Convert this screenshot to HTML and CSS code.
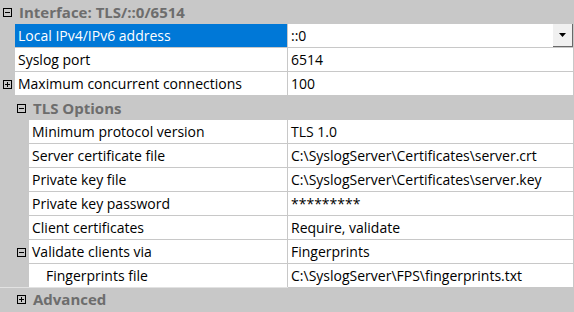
FILE: index.html
```html
<!DOCTYPE html>
<html lang="en">
<head>
    <meta charset="UTF-8">
    <title>Interface properties</title>
    <link rel="stylesheet" href="styles.css">
</head>
<body>

    <div class="grid">
        <div class="row cat">
            <span class="gutter g1"><svg class="exp" width="9" height="9" viewBox="0 0 9 9"><rect x="0.5" y="0.5" width="8" height="8" fill="none" stroke="#000"/><path d="M2 4.5h5" stroke="#000"/></svg></span>
            <span class="title">Interface: TLS/::0/6514</span>
        </div>

        <div class="row prop sel">
            <span class="gutter g1"></span>
            <span class="name">Local IPv4/IPv6 address</span>
            <span class="value">::0<span class="drop"><svg width="7" height="4" viewBox="0 0 7 4"><path d="M0 0h7L3.5 4z" fill="#000"/></svg></span></span>
        </div>
        <div class="row prop">
            <span class="gutter g1"></span>
            <span class="name">Syslog port</span>
            <span class="value">6514</span>
        </div>
        <div class="row prop">
            <span class="gutter g1"><svg class="exp" width="9" height="9" viewBox="0 0 9 9"><rect x="0.5" y="0.5" width="8" height="8" fill="none" stroke="#000"/><path d="M2 4.5h5M4.5 2v5" stroke="#000"/></svg></span>
            <span class="name">Maximum concurrent connections</span>
            <span class="value">100</span>
        </div>

        <div class="row cat">
            <span class="gutter g2"><svg class="exp" width="9" height="9" viewBox="0 0 9 9"><rect x="0.5" y="0.5" width="8" height="8" fill="none" stroke="#000"/><path d="M2 4.5h5" stroke="#000"/></svg></span>
            <span class="title">TLS Options</span>
        </div>
        <div class="row prop">
            <span class="gutter g2"></span>
            <span class="name">Minimum protocol version</span>
            <span class="value">TLS 1.0</span>
        </div>
        <div class="row prop">
            <span class="gutter g2"></span>
            <span class="name">Server certificate file</span>
            <span class="value">C:\SyslogServer\Certificates\server.crt</span>
        </div>
        <div class="row prop">
            <span class="gutter g2"></span>
            <span class="name">Private key file</span>
            <span class="value">C:\SyslogServer\Certificates\server.key</span>
        </div>
        <div class="row prop">
            <span class="gutter g2"></span>
            <span class="name">Private key password</span>
            <span class="value">*********</span>
        </div>
        <div class="row prop">
            <span class="gutter g2"></span>
            <span class="name">Client certificates</span>
            <span class="value">Require, validate</span>
        </div>
        <div class="row prop">
            <span class="gutter g2"><svg class="exp" width="9" height="9" viewBox="0 0 9 9"><rect x="0.5" y="0.5" width="8" height="8" fill="none" stroke="#000"/><path d="M2 4.5h5" stroke="#000"/></svg></span>
            <span class="name">Validate clients via</span>
            <span class="value">Fingerprints</span>
        </div>
        <div class="row prop">
            <span class="gutter g2"></span>
            <span class="name sub">Fingerprints file</span>
            <span class="value">C:\SyslogServer\FPS\fingerprints.txt</span>
        </div>

        <div class="row cat last">
            <span class="gutter g2"><svg class="exp" width="9" height="9" viewBox="0 0 9 9"><rect x="0.5" y="0.5" width="8" height="8" fill="none" stroke="#000"/><path d="M2 4.5h5M4.5 2v5" stroke="#000"/></svg></span>
            <span class="title">Advanced</span>
        </div>
    </div>

</body>
</html>
```

FILE: styles.css
```css
* {
    box-sizing: border-box;
    margin: 0;
    padding: 0;
}

body {
    background-color: #c8c8c8;
    font-family: 'Open Sans', sans-serif;
    font-size: 14px;
    color: #000;
}

.grid {
    width: 573px;
    display: flex;
    flex-direction: column;
}

.row {
    display: flex;
    height: 24px;
}

.gutter {
    flex: none;
    display: flex;
    align-items: center;
    justify-content: flex-end;
    padding-right: 3px;
}

.g1 {
    width: 15px;
}

.g2 {
    width: 29px;
}

.exp {
    display: block;
}

.cat .title {
    display: flex;
    align-items: center;
    padding-left: 4px;
    padding-bottom: 1px;
    font-size: 15px;
    font-weight: bold;
    color: #6d6d6d;
}

.row.last {
    border-top: 1px solid #e2e2e2;
    margin-top: -1px;
}

.prop .name,
.prop .value {
    display: flex;
    align-items: center;
    background: white;
    border-bottom: 1px solid #c8c8c8;
    white-space: nowrap;
}

.prop .name {
    flex: 1;
    padding-left: 3px;
    border-right: 1px solid #c8c8c8;
}

.prop .name.sub {
    padding-left: 17px;
}

.prop .value {
    width: 285px;
    flex: none;
    padding-left: 3px;
    position: relative;
}

.sel .name {
    background: #0078d7;
    color: white;
}

.drop {
    position: absolute;
    right: 0;
    top: 0;
    width: 20px;
    height: 23px;
    background: #f0f0f0;
    border-right: 1px solid #696969;
    border-bottom: 1px solid #696969;
    display: flex;
    align-items: center;
    justify-content: center;
}
```
